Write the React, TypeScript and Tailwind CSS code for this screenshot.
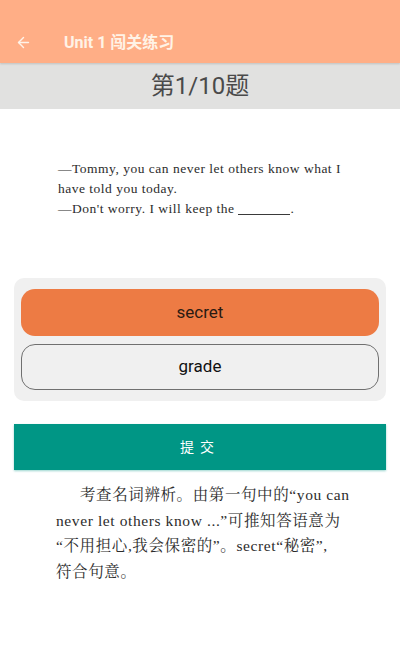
import { ArrowLeft } from "lucide-react";

const sans = "font-['Roboto','Noto_Sans_CJK_SC',sans-serif]";
const serif = "font-['Liberation_Serif','Noto_Serif_CJK_SC','Noto_Sans_CJK_SC',serif]";

export default function App() {
  return (
    <div className={`w-[400px] h-[666px] bg-white flex flex-col ${sans}`}>
      {/* Toolbar */}
      <div className="h-[63px] bg-[#ffae86] flex items-end pb-[12px] shadow-[0_1px_2px_rgba(0,0,0,0.15)] z-10">
        <ArrowLeft className="ml-[15px] h-[17px] w-[17px] text-[#fff3e8]" strokeWidth={2} />
        <span className="ml-[32px] text-[16px] font-bold text-[#fff3e6] leading-none">Unit 1 闯关练习</span>
      </div>

      {/* Question number */}
      <div className="h-[46px] bg-[#e1e1e0] flex items-center justify-center">
        <span className="text-[24px] text-[#4a4a4a]">第1/10题</span>
      </div>

      {/* Question */}
      <div className={`pt-[50px] pl-[58px] pr-[40px] text-[13.5px] leading-[20px] tracking-[0.5px] text-[#2c2c2c] ${serif}`}>
        <p>—Tommy, you can never let others know what I</p>
        <p>have told you today.</p>
        <p>
          —Don't worry. I will keep the <span className="inline-block w-[52px] border-b border-[#3a3a3a] translate-y-[2px]"></span>.
        </p>
      </div>

      {/* Options */}
      <div className="mt-[59px] mx-[14px] bg-[#f0f0f0] rounded-[10px] px-[7px] py-[11px] flex flex-col gap-[8px]">
        <button className="h-[47px] rounded-[14px] bg-[#ed7b44] text-[17px] text-[#2a1a12]">secret</button>
        <button className="h-[46px] rounded-[14px] bg-[#f0f0f0] border border-[#707070] text-[17px] text-[#111]">grade</button>
      </div>

      {/* Submit */}
      <button className="mt-[23px] mx-[14px] h-[46px] bg-[#009685] text-white text-[14px] tracking-[6px] shadow-[0_1px_2px_rgba(0,150,136,0.4)]">
        提交
      </button>

      {/* Explanation */}
      <div className={`mt-[12px] pl-[56px] pr-[40px] text-[15.5px] leading-[25.5px] tracking-[0.6px] text-[#2c2c2c] ${serif}`}>
        <p className="indent-[24px]">考查名词辨析。由第一句中的“you can</p>
        <p>never let others know ...”可推知答语意为</p>
        <p>“不用担心,我会保密的”。secret“秘密”,</p>
        <p>符合句意。</p>
      </div>
    </div>
  );
}
